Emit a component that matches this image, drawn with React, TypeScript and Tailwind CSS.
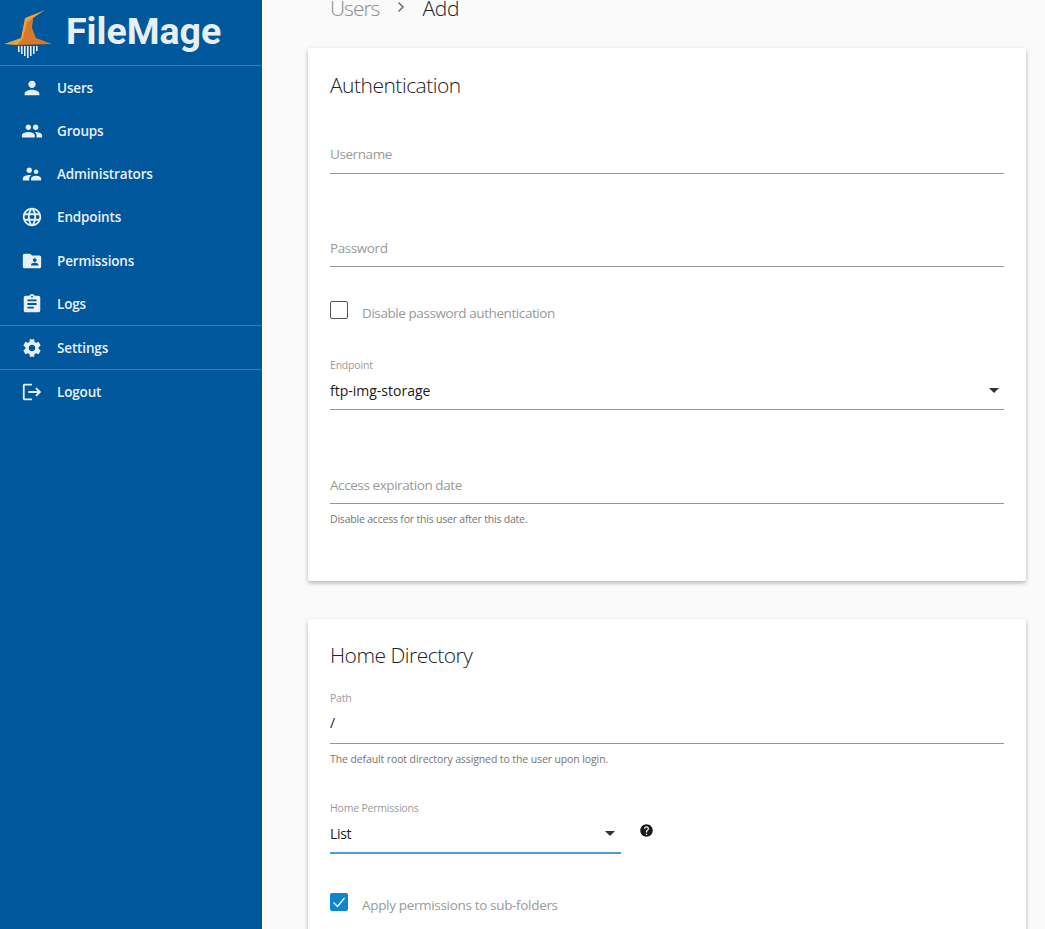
import { MdArrowDropDown, MdAssignment, MdFolderShared, MdHelp, MdLanguage, MdLogout, MdPeople, MdPerson, MdSettings, MdSupervisorAccount } from "react-icons/md"
import type { ReactNode } from "react"

const topItems = [
  { label: "Users", icon: MdPerson },
  { label: "Groups", icon: MdPeople },
  { label: "Administrators", icon: MdSupervisorAccount },
  { label: "Endpoints", icon: MdLanguage },
]

const lowerItems = [
  { label: "Permissions", icon: MdFolderShared },
  { label: "Logs", icon: MdAssignment },
]

function NavItem({ label, icon: Icon }: { label: string; icon: typeof MdPerson }) {
  return (
    <div className="flex h-[43.1px] items-center text-[#e8f0f7]">
      <div className="flex w-[57px] justify-center pl-[7px]">
        <Icon size={22} />
      </div>
      <span className="text-[13.5px] font-semibold tracking-[-0.15px]">{label}</span>
    </div>
  )
}

function Logo() {
  return (
    <div className="flex h-[66px] items-center border-b border-[#3a7db2]">
      <svg width="56" height="56" viewBox="0 0 56 56" className="shrink-0">
        <path d="M45 5 L25 13 L21 33 L4 39 L17 40 L30 30 L33 13 Z" fill="#e8a33a" />
        <path d="M45 5 L33 13 L32 23 L36 33 L52 39 L17 40 L23 33 L27 17 Z" fill="#d9772b" />
        <g fill="#e8f0f7">
          <rect x="18" y="41" width="1.6" height="6" />
          <rect x="21" y="41" width="1.6" height="8" />
          <rect x="24" y="41" width="1.6" height="10" />
          <rect x="27" y="41" width="1.6" height="12" />
          <rect x="30" y="41" width="1.6" height="10" />
          <rect x="33" y="41" width="1.6" height="8" />
          <rect x="36" y="41" width="1.6" height="5" />
        </g>
      </svg>
      <span className="ml-[10px] pb-[2px] font-['Roboto',sans-serif] text-[37.5px] font-bold leading-none text-[#e8f0f7]">
        FileMage
      </span>
    </div>
  )
}

function Card({ children, className }: { children: ReactNode; className: string }) {
  return (
    <section className={`rounded-[2px] bg-white px-[22px] shadow-[0_2px_4px_rgba(0,0,0,0.28)] ${className}`}>
      {children}
    </section>
  )
}

function Checkbox({ label, checked, className }: { label: string; checked?: boolean; className: string }) {
  return (
    <div className={`flex h-[18px] items-center ${className}`}>
      {checked ? (
        <span className="flex h-[18px] w-[18px] items-center justify-center rounded-[2px] bg-[#0f85cf]">
          <svg width="14" height="14" viewBox="0 0 14 14" fill="none" stroke="#fff" strokeWidth="1.2">
            <path d="M1.5 7.5 L5.5 11.5 L12.5 3" />
          </svg>
        </span>
      ) : (
        <span className="h-[18px] w-[18px] rounded-[2px] border-[1.5px] border-[#555]" />
      )}
      <span className={`ml-[14px] pt-[6px] text-[13.5px] text-[#9a9a9a] ${checked ? "tracking-[-0.33px]" : "tracking-[-0.42px]"}`}>{label}</span>
    </div>
  )
}

function Small({ children, className }: { children: ReactNode; className: string }) {
  return <div className={`h-[14px] text-[10.5px] leading-[14px] ${className}`}>{children}</div>
}

export default function App() {
  return (
    <div className="flex h-[929px] w-[1045px] overflow-hidden bg-[#fafafa] font-['Open_Sans',sans-serif]">
      <aside className="h-full w-[262px] shrink-0 bg-[#01579b]">
        <Logo />
        <nav>
          <div className="h-[260px] border-b border-[#3a7db2] pt-[0.6px]">
            {topItems.map((item) => (
              <NavItem key={item.label} {...item} />
            ))}
            <div className="pt-[0.5px]">
              {lowerItems.map((item) => (
                <NavItem key={item.label} {...item} />
              ))}
            </div>
          </div>
          <div className="h-[44px] border-b border-[#3a7db2] pt-[0.5px]">
            <NavItem label="Settings" icon={MdSettings} />
          </div>
          <div className="pt-[0.5px]">
            <NavItem label="Logout" icon={MdLogout} />
          </div>
        </nav>
      </aside>

      <main className="ml-[46px] w-[718px] shrink-0">
        <div className="-mt-[7px] flex h-[32px] items-center px-[22px] text-[21px] font-light">
          <span className="tracking-[-1px] text-[#8a8a8a]">Users</span>
          <svg width="10" height="12" viewBox="0 0 10 12" fill="none" stroke="#757575" strokeWidth="1.6" className="ml-[17px] mr-[16px] -mt-[4px]">
            <path d="M2.5 1.5 L7 6 L2.5 10.5" />
          </svg>
          <span className="tracking-[-0.3px] text-[#222]">Add</span>
        </div>

        <Card className="mt-[23px] pt-[21px] pb-[55px]">
          <h2 className="h-[32px] text-[21px] font-light leading-[32px] tracking-[-0.5px] text-[#222]">Authentication</h2>
          <div className="mt-[37px] flex h-[36px] items-center border-b border-[#949494] pb-[2px] text-[13.5px] tracking-[-0.42px] text-[#9a9a9a]">Username</div>
          <div className="mt-[57px] flex h-[36px] items-center border-b border-[#949494] text-[13.5px] tracking-[-0.42px] text-[#9a9a9a]">Password</div>
          <Checkbox label="Disable password authentication" className="mt-[34px]" />
          <Small className="mt-[39px] tracking-[-0.2px] text-[#9a9a9a]">Endpoint</Small>
          <div className="flex h-[38px] items-center justify-between border-b border-[#949494] pb-[1px] text-[14px] text-[#1a1a1a]">
            <span>ftp-img-storage</span>
            <MdArrowDropDown size={24} className="-mr-[2px] text-[#333]" />
          </div>
          <div className="mt-[57px] flex h-[37px] items-center border-b border-[#949494] text-[13.5px] tracking-[-0.42px] text-[#9a9a9a]">Access expiration date</div>
          <Small className="mt-[8px] tracking-[-0.2px] text-[#757575]">Disable access for this user after this date.</Small>
        </Card>

        <Card className="mt-[38px] pt-[20px] pb-[40px]">
          <h2 className="h-[32px] text-[21px] font-light leading-[32px] tracking-[-0.5px] text-[#222]">Home Directory</h2>
          <Small className="mt-[20px] tracking-[-0.2px] text-[#9a9a9a]">Path</Small>
          <div className="flex h-[39px] items-center border-b border-[#949494] pb-[3px] text-[14px] text-[#1a1a1a]">/</div>
          <Small className="mt-[8px] tracking-[-0.11px] text-[#757575]">The default root directory assigned to the user upon login.</Small>
          <Small className="mt-[35px] tracking-[-0.2px] text-[#9a9a9a]">Home Permissions</Small>
          <div className="flex items-start">
            <div className="flex h-[39px] w-[291px] items-center justify-between border-b-2 border-[#4b9ccf] pb-[1px] text-[14px] tracking-[-0.3px] text-[#1a1a1a]">
              <span>List</span>
              <MdArrowDropDown size={24} className="mr-[-1px] text-[#333]" />
            </div>
            <MdHelp size={15} className="ml-[18px] mt-[8px] text-[#1a1a1a]" />
          </div>
          <Checkbox label="Apply permissions to sub-folders" checked className="mt-[39px]" />
        </Card>
      </main>
    </div>
  )
}
